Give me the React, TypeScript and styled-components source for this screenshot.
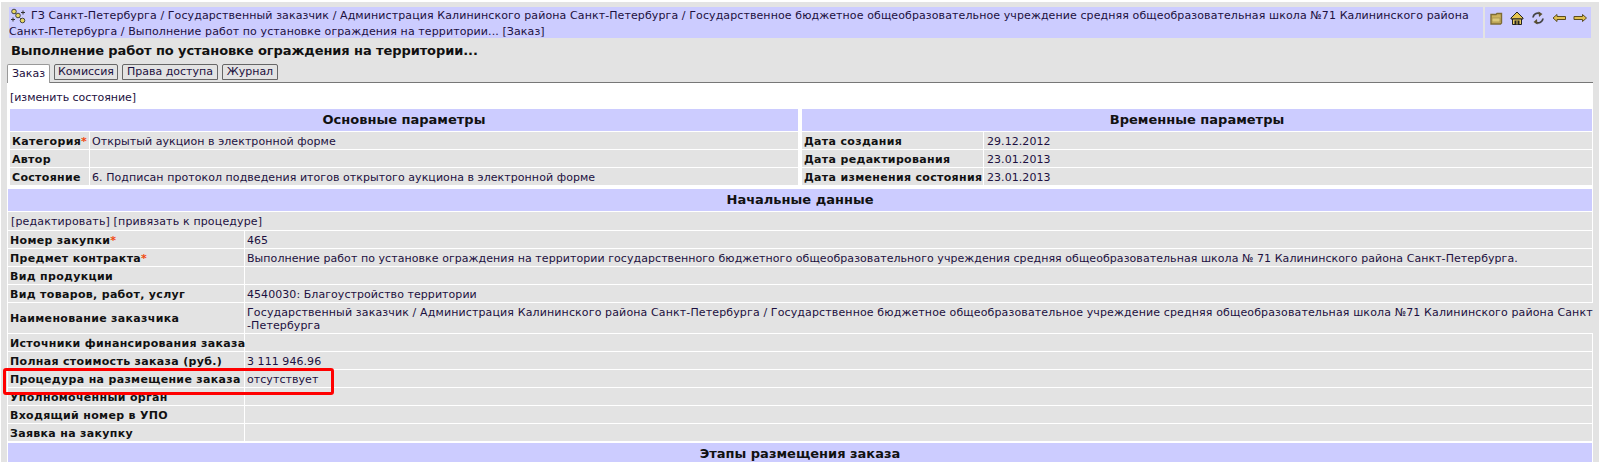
import React from "react";
import styled, { createGlobalStyle } from "styled-components";

const Global = createGlobalStyle`
  html, body { margin: 0; padding: 0; background: #fff; overflow: hidden; height: 462px; }
  body { font-family: "DejaVu Sans", Verdana, sans-serif; font-size: 11px; color: #1c1030; }
`;
const Page = styled.div`
  margin: 2px 2px 0 1px; padding: 5px 6px 0 6px; background: #e3e3e3; height: 460px; box-sizing: border-box; overflow: hidden; position: relative;
`;
const Crumbs = styled.div`display: flex; gap: 2px; height: 31px; margin: 0 2px 0 2px;`;
const CrumbText = styled.div`
  flex: 1; background: #ccf; line-height: 14px; font-size: 11px; letter-spacing: 0.1px; color: #1c1040;
`;
const Tools = styled.div`
  width: 106px; background: #ccf; display: flex; align-items: flex-start; gap: 5px; padding: 3px 0 0 3px; box-sizing: border-box;
`;
const Title = styled.h1`margin: 5px 0 0 4px; font-size: 13px; line-height: 16px; font-weight: bold; color: #111; letter-spacing: -0.09px;`;
const TabBar = styled.div`display: flex; gap: 4px; margin-top: 5px; height: 18px; align-items: flex-end;`;
const Tab = styled.div<{ $active?: boolean; $w: number }>`
  width: ${p => p.$w}px; box-sizing: border-box; text-align: center;
  border: 1px solid ${p => (p.$active ? "#999" : "#666")}; border-bottom: ${p => (p.$active ? "none" : "1px solid #666")};
  border-radius: 2px 2px 0 0; background: ${p => (p.$active ? "#fff" : "#e3e3e3")};
  line-height: ${p => (p.$active ? "18px" : "14px")}; margin-bottom: ${p => (p.$active ? "-1px" : "2px")};
  font-size: 11px; color: #1c1040; position: relative; z-index: 1;
`;
const Content = styled.div`background: #fff; border-top: 1px solid #777; height: 400px;`;
const LinkLine = styled.div`
  padding: 1px 3px 0; line-height: 17px; height: 18px; box-sizing: border-box; font-size: 11px; color: #1c1040; letter-spacing: 0.15px;
  background: #e3e3e3; margin: 0 1px 1px;
`;
const TopLine = styled.div`padding: 6px 3px 2px; line-height: 18px; color: #1c1040; letter-spacing: -0.05px;`;
const TwoCols = styled.div`display: flex; gap: 4px; padding: 0 0 3px 3px;`;
const Col = styled.div<{ $w: number }>`width: ${p => p.$w}px; flex: none;`;
const Header = styled.div`
  background: #ccf; height: 22px; line-height: 22px; text-align: center; font-size: 13px; font-weight: bold; color: #111; margin-bottom: 1px;
`;
const WideHeader = styled(Header)`margin: 2px 1px 0;`;
const PlainHeader = styled(Header)`margin: 0 1px 1px;`;
const Rows = styled.div`margin: 0 1px;`;
const Row = styled.div<{ $label: number; $h?: number }>`
  display: grid; grid-template-columns: ${p => p.$label}px 1fr; gap: 1px; margin-bottom: 1px; min-height: ${p => p.$h ?? 17}px;
`;
const Label = styled.div`
  background: #e3e3e3; font-weight: bold; color: #111; padding: 1px 2px 0; display: flex; align-items: center; white-space: nowrap;
  letter-spacing: 0.32px;
`;
const Value = styled.div<{ $wide?: boolean; $inset: number }>`
  background: #e3e3e3; padding: 1px 0 0 ${p => p.$inset}px; display: flex; align-items: center; color: #1c1040; line-height: 13px; white-space: nowrap;
  letter-spacing: ${p => (p.$wide ? "0.13px" : "0.06px")};
`;
const Star = styled.span`color: #f04a10; font-weight: bold; letter-spacing: 0;`;
const Highlight = styled.div`
  position: absolute; left: 2px; top: 366px; width: 331px; height: 27px; border: 3px solid #f00; border-radius: 3px; box-sizing: border-box;
`;
const LeadIcon = styled.svg`vertical-align: -6px; margin: 1px 5px 1px 1px;`;

const IconFrame = ({ children }: { children: React.ReactNode }) => (
  <svg width="16" height="16" viewBox="0 0 16 16">{children}</svg>
);
const Folder = () => (
  <IconFrame>
    <path d="M3 4.5h5l1-1h4.5v9.5l-1 1H3z" fill="#cdb25c" stroke="#7d6c34" strokeWidth="1.4" />
    <path d="M4 8h8v4H4z" fill="#dcc878" stroke="#a08c48" strokeWidth="0.7" />
  </IconFrame>
);
const Home = () => (
  <IconFrame>
    <path d="M8 2L14 8v1H2V8z" fill="#e6c650" stroke="#222" strokeWidth="1" />
    <path d="M3.5 9h9v5.5h-9z" fill="#e8cc60" stroke="#222" strokeWidth="1" />
    <path d="M5.5 10.5h5v4h-5z" fill="#222" />
    <path d="M7.5 10.5h1v4h-1z" fill="#e8cc60" />
  </IconFrame>
);
const Refresh = () => (
  <IconFrame>
    <path d="M3 7.5A5 5 0 0 1 10 3.5" fill="none" stroke="#444" strokeWidth="1.8" />
    <path d="M8.5 1.5L12.5 4 9 7z" fill="#5a5030" />
    <path d="M13 8.5A5 5 0 0 1 6 12.5" fill="none" stroke="#444" strokeWidth="1.8" />
    <path d="M7.5 14.5L3.5 12 7 9z" fill="#5a5030" />
  </IconFrame>
);
const ArrowL = () => (
  <IconFrame>
    <path d="M2 8l4-3.5V6.5h8.5v3H6v2z" fill="#e0c050" stroke="#5a4c20" strokeWidth="1" />
  </IconFrame>
);
const ArrowR = () => (
  <IconFrame>
    <path d="M14.5 8l-4-3.5V6.5H2v3h8.5v2z" fill="#e0c050" stroke="#5a4c20" strokeWidth="1" />
  </IconFrame>
);
const TreeIcon = () => (
  <LeadIcon width="16" height="16" viewBox="0 0 16 16">
    <path d="M11 4.5h4M13 2.5v4M1 11.5h4M3 9.5v4" stroke="#333" strokeWidth="1" />
    <path d="M4 4l5 5 3 3" stroke="#555" strokeWidth="1" fill="none" />
    <g fill="#e8d860" stroke="#444" strokeWidth="1">
      <circle cx="4" cy="3.5" r="2.3" /><circle cx="8" cy="7.5" r="2.3" /><circle cx="12.5" cy="12.5" r="2.3" />
    </g>
  </LeadIcon>
);

const Kv = ({ l, v, star, w, h, wide, inset = 2 }: { l: string; v?: React.ReactNode; star?: boolean; w: number; h?: number; wide?: boolean; inset?: number }) => (
  <Row $label={w} $h={h}>
    <Label>{l}{star && <Star>*</Star>}</Label>
    <Value $wide={wide} $inset={inset}><span>{v}</span></Value>
  </Row>
);

export default function App() {
  return (
    <Page>
      <Global />
      <Crumbs>
        <CrumbText><TreeIcon />ГЗ Санкт-Петербурга / Государственный заказчик / Администрация Калининского района Санкт-Петербурга / Государственное бюджетное общеобразовательное учреждение средняя общеобразовательная школа №71 Калининского района Санкт-Петербурга / Выполнение работ по установке ограждения на территории... [Заказ]</CrumbText>
        <Tools>
          <Folder />
          <Home />
          <Refresh />
          <ArrowL />
          <ArrowR />
        </Tools>
      </Crumbs>
      <Title>Выполнение работ по установке ограждения на территории...</Title>
      <TabBar>
        <Tab $active $w={43}>Заказ</Tab><Tab $w={64}>Комиссия</Tab><Tab $w={96}>Права доступа</Tab><Tab $w={56}>Журнал</Tab>
      </TabBar>
      <Content>
        <TopLine>[изменить состояние]</TopLine>
        <TwoCols>
          <Col $w={788}>
            <Header>Основные параметры</Header>
            <Kv w={79} l="Категория" star v="Открытый аукцион в электронной форме" />
            <Kv w={79} l="Автор" />
            <Kv w={79} l="Состояние" v="6. Подписан протокол подведения итогов открытого аукциона в электронной форме" />
          </Col>
          <Col $w={790}>
            <Header>Временные параметры</Header>
            <Kv w={181} inset={3} l="Дата создания" v="29.12.2012" />
            <Kv w={181} inset={3} l="Дата редактирования" v="23.01.2013" />
            <Kv w={181} inset={3} l="Дата изменения состояния" v="23.01.2013" />
          </Col>
        </TwoCols>
        <PlainHeader>Начальные данные</PlainHeader>
        <LinkLine>[редактировать] [привязать к процедуре]</LinkLine>
        <Rows>
          <Kv w={236} l="Номер закупки" star v="465" />
          <Kv w={236} l="Предмет контракта" star v="Выполнение работ по установке ограждения на территории государственного бюджетного общеобразовательного учреждения средняя общеобразовательная школа № 71 Калининского района Санкт-Петербурга." />
          <Kv w={236} l="Вид продукции" />
          <Kv w={236} l="Вид товаров, работ, услуг" v="4540030: Благоустройство территории" />
          <Kv w={236} h={30} wide l="Наименование заказчика" v={<>Государственный заказчик / Администрация Калининского района Санкт-Петербурга / Государственное бюджетное общеобразовательное учреждение средняя общеобразовательная школа №71 Калининского района Санкт<br />-Петербурга</>} />
          <Kv w={236} l="Источники финансирования заказа" />
          <Kv w={236} l="Полная стоимость заказа (руб.)" v="3 111 946.96" />
          <Kv w={236} l="Процедура на размещение заказа" v="отсутствует" />
          <Kv w={236} l="Уполномоченный орган" />
          <Kv w={236} l="Входящий номер в УПО" />
          <Kv w={236} l="Заявка на закупку" />
        </Rows>
        <WideHeader>Этапы размещения заказа</WideHeader>
      </Content>
      <Highlight />
    </Page>
  );
}
